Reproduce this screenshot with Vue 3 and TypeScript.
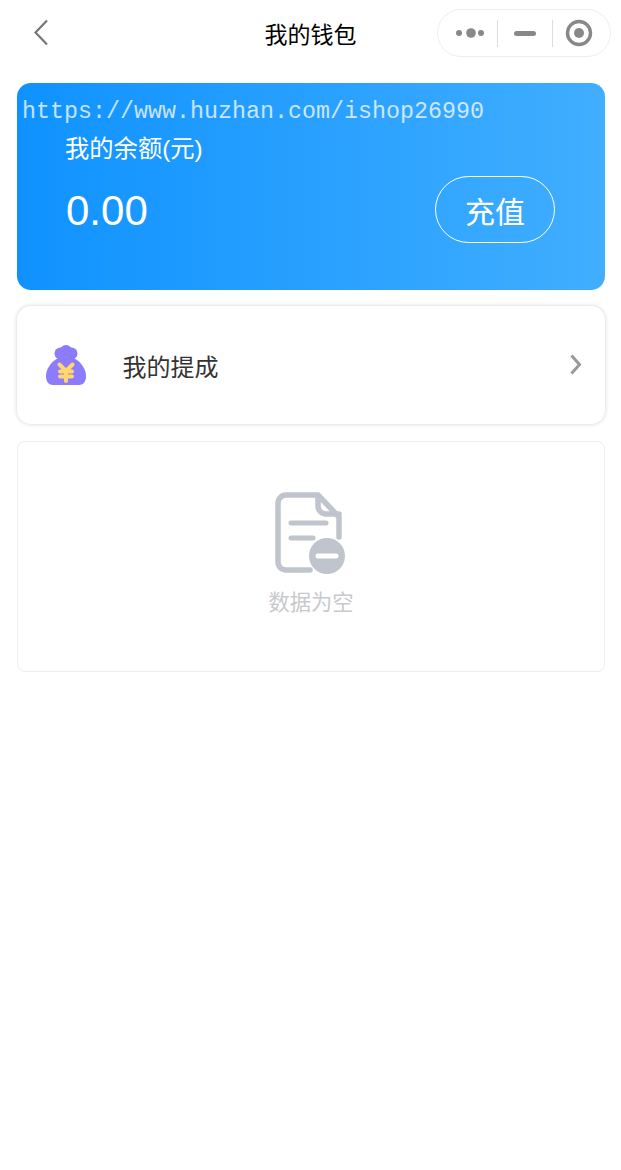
<template>
  <div class="page">
    <header class="nav">
      <svg class="back" width="18" height="28" viewBox="0 0 18 28" fill="none">
        <path d="M15 1.500 3.500 13.500 15 25.500" stroke="#777" stroke-width="2.2" />
      </svg>
      <h1 class="nav-title">我的钱包</h1>
      <div class="capsule">
        <svg class="capsule-item" width="59" height="12" viewBox="0 0 59 12">
          <circle cx="21" cy="6" r="3" fill="#888" />
          <circle cx="33" cy="6" r="4.800" fill="#888" />
          <circle cx="43" cy="6" r="3" fill="#888" />
        </svg>
        <span class="capsule-sep"></span>
        <span class="capsule-min"></span>
        <span class="capsule-sep"></span>
        <svg class="capsule-item" width="58" height="28" viewBox="0 0 58 28">
          <circle cx="26" cy="14" r="11.500" fill="none" stroke="#888" stroke-width="3.400" />
          <circle cx="26" cy="14" r="5" fill="#888" />
        </svg>
      </div>
    </header>

    <main class="content">
      <section class="balance">
        <div class="watermark">https://www.huzhan.com/ishop26990</div>
        <div class="balance-label">我的余额(元)</div>
        <div class="balance-row">
          <span class="balance-amount">{{ balance }}</span>
          <button class="recharge" type="button">充值</button>
        </div>
      </section>

      <section class="menu">
        <svg class="bag" width="40" height="41" viewBox="0 0 40 41">
          <path
            d="M12 13C5 17 0 24 0 31c0 6 3 9 7 9h26c4 0 7-3 7-9 0-7-5-14-12-18z"
            fill="#8c7bfa"
          />
          <circle cx="20" cy="6.500" r="6.500" fill="#8c7bfa" />
          <circle cx="14.500" cy="8.500" r="6" fill="#8c7bfa" />
          <circle cx="25.500" cy="8.500" r="6" fill="#8c7bfa" />
          <path
            d="M13.500 19.500l6.500 6.500 6.500-6.500M14 26.500h12M14 31.500h12M20 26v10"
            fill="none"
            stroke="#ffd76e"
            stroke-width="4"
            stroke-linecap="round"
            stroke-linejoin="round"
          />
        </svg>
        <span class="menu-text">我的提成</span>
        <svg class="chevron" width="14" height="22" viewBox="0 0 14 22" fill="none">
          <path d="M2.500 1.500 10.500 10.500 2.500 19.500" stroke="#999" stroke-width="3" />
        </svg>
      </section>

      <section class="empty">
        <svg width="72" height="84" viewBox="0 0 72 84" fill="none">
          <path
            d="M36 79H12a8 8 0 0 1-8-8V12a8 8 0 0 1 8-8h32l21 22v20M44 5v10a8 8 0 0 0 8 8h13"
            stroke="#c0c4cc"
            stroke-width="5.500"
            stroke-linecap="round"
            stroke-linejoin="round"
          />
          <path d="M17 32h35M17 47h22" stroke="#c0c4cc" stroke-width="5" stroke-linecap="round" />
          <circle cx="53" cy="65" r="18" fill="#c0c4cc" />
          <path d="M44 65h18" stroke="#fff" stroke-width="5" stroke-linecap="round" />
        </svg>
        <p class="empty-text">数据为空</p>
      </section>
    </main>
  </div>
</template>

<script setup lang="ts">
import { ref } from 'vue'

const balance = ref('0.00')
</script>

<style>
html,
body {
  background: #fff;
}
</style>

<style scoped>
.page {
  width: 621px;
  min-height: 1170px;
  background: #fff;
  font-family: 'Liberation Sans', 'Noto Sans CJK SC', sans-serif;
}

.nav {
  display: grid;
  grid-template-columns: 1fr auto 1fr;
  align-items: center;
  height: 66px;
  padding: 0 10px;
  box-sizing: border-box;
}

.back {
  display: block;
  margin-left: 22px;
}

.nav-title {
  margin: 0;
  font-size: 23px;
  font-weight: 400;
  color: #000;
}

.capsule {
  display: flex;
  align-items: center;
  justify-self: end;
  width: 174px;
  height: 48px;
  box-sizing: border-box;
  border: 1px solid #eee;
  border-radius: 24px;
}

.capsule-item {
  display: block;
  flex: none;
}

.capsule-sep {
  flex: none;
  width: 1px;
  height: 27px;
  background: #ddd;
}

.capsule-min {
  flex: none;
  width: 22px;
  height: 5px;
  margin: 0 16px;
  border-radius: 2.500px;
  background: #888;
}

.content {
  display: flex;
  flex-direction: column;
  gap: 16px;
  margin: 17px 16px 0 17px;
}

.balance {
  height: 207px;
  padding: 15px 50px 0 49px;
  box-sizing: border-box;
  border-radius: 14px;
  background: linear-gradient(90deg, #0f92ff, #41aeff);
  color: #fff;
}

.watermark {
  margin-left: -44px;
  font-family: 'Liberation Mono', monospace;
  font-size: 23.330px;
  line-height: 28px;
  white-space: nowrap;
  color: rgba(255, 255, 255, 0.75);
}

.balance-label {
  margin-top: 6px;
  margin-left: -1px;
  font-size: 24.300px;
  line-height: 34px;
}

.balance-row {
  display: flex;
  align-items: center;
  justify-content: space-between;
  margin-top: 10px;
}

.balance-amount {
  padding-top: 2px;
  font-size: 42px;
  line-height: 65px;
}

.recharge {
  width: 120px;
  height: 67px;
  padding: 0;
  border: 1px solid #fff;
  border-radius: 34px;
  background: transparent;
  color: #fff;
  font-family: inherit;
  font-size: 30px;
}

.menu {
  display: flex;
  align-items: center;
  height: 118px;
  padding: 0 22px 0 29px;
  box-sizing: border-box;
  border-radius: 14px;
  background: #fff;
  box-shadow: 0 0 4px rgba(0, 0, 0, 0.18);
}

.menu-text {
  flex: 1;
  margin-left: 36.500px;
  font-size: 24px;
  color: #333;
}

.empty {
  display: flex;
  flex-direction: column;
  align-items: center;
  height: 231px;
  margin-top: 1px;
  padding-top: 49px;
  box-sizing: border-box;
  border: 1px solid #eee;
  border-radius: 8px;
}

.empty svg {
  margin-left: -2px;
}

.empty-text {
  margin: 11px 0 0;
  font-size: 21.300px;
  line-height: 34px;
  color: #c8c9cc;
}
</style>
